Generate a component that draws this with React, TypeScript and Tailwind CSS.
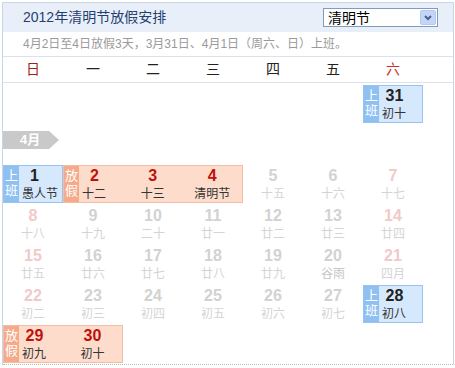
type Day = {
  n: number;
  l: string;
  tone?: "gray" | "pink" | "term";
};

const font = { fontFamily: '"Liberation Sans", "Noto Sans CJK SC", sans-serif' };

const weekdays = ["日", "一", "二", "三", "四", "五", "六"];

function PlainCell({ d }: { d: Day }) {
  const num =
    d.tone === "pink" ? "text-[#f0caca]" : "text-[#d2d2d2]";
  const lunar = d.tone === "term" ? "text-[#c6c6c6]" : "text-[#d4d4d4]";
  return (
    <div className="h-[38px] my-[1px] flex flex-col items-center">
      <div className={`pt-[1px] text-[16px] leading-[20px] font-bold ${num}`}>{d.n}</div>
      <div className={`text-[12px] leading-[17px] ${lunar}`}>{d.l}</div>
    </div>
  );
}

function Strip({ text, kind }: { text: string; kind: "work" | "off" }) {
  return (
    <div
      className={`w-[15px] shrink-0 flex flex-col items-center pt-[2px] text-[13px] leading-[15px] text-white ${
        kind === "work" ? "bg-[#8fc0f2]" : "bg-[#f5aa8a]"
      }`}
    >
      <span>{text[0]}</span>
      <span>{text[1]}</span>
    </div>
  );
}

function Inner({ d, first, kind }: { d: Day; first?: boolean; kind: "work" | "off" }) {
  const num = kind === "work" ? "text-[#222]" : "text-[#c0100c]";
  if (first) {
    return (
      <div className="w-[44px] shrink-0 flex flex-col">
        <div className={`pr-[13px] text-center text-[16px] leading-[20px] font-bold ${num}`}>{d.n}</div>
        <div className="pl-[3px] text-[12px] leading-[17px] text-[#333] whitespace-nowrap">{d.l}</div>
      </div>
    );
  }
  return (
    <div className="flex-1 flex flex-col items-center">
      <div className={`text-[16px] leading-[20px] font-bold ${num}`}>{d.n}</div>
      <div className="text-[12px] leading-[17px] text-[#333] whitespace-nowrap">{d.l}</div>
    </div>
  );
}

function Block({ days, kind, span }: { days: Day[]; kind: "work" | "off"; span: string }) {
  const box =
    kind === "work"
      ? "bg-[#d5e8fc] border-[#98c3ef]"
      : "bg-[#fddccb] border-[#f2bea6]";
  return (
    <div className={`${span} h-[38px] my-[1px] border flex ${box}`}>
      <Strip text={kind === "work" ? "上班" : "放假"} kind={kind} />
      {days.map((d, i) => (
        <Inner key={d.n} d={d} first={i === 0} kind={kind} />
      ))}
    </div>
  );
}

const g = (n: number, l: string, tone: Day["tone"] = "gray"): Day => ({ n, l, tone });

export default function App() {
  return (
    <div className="w-[455px] h-[368px] bg-white pt-[2px] pl-[2px] overflow-hidden" style={font}>
      <div className="w-[452px] border-x border-t border-[#c8d5e9]">
        <div className="h-[29px] bg-[#e9eff8] flex items-center justify-between pl-[20px] pr-[15px]">
          <span className="text-[14px] text-[#1f3f73]">2012年清明节放假安排</span>
          <div className="w-[115px] h-[19px] bg-white border border-[#7f9db9] flex items-center justify-between pl-[4px] pr-[1px]">
            <span className="text-[14px] leading-[16px] text-black">清明节</span>
            <div className="w-[16px] h-[15px] rounded-[2px] bg-[#c3d5fb] border border-[#b3c7ef] flex items-center justify-center">
              <svg width="8" height="6" viewBox="0 0 8 6">
                <polyline points="1,1 4,4 7,1" fill="none" stroke="#4d6185" strokeWidth="2" />
              </svg>
            </div>
          </div>
        </div>
        <div className="h-[24px] flex items-center pl-[20px] text-[12px] text-[#9a9a9a]">
          4月2日至4日放假3天，3月31日、4月1日（周六、日）上班。
        </div>
        <div className="h-[27px] border-y border-[#dde2ea] grid grid-cols-[repeat(7,60px)] items-center">
          {weekdays.map((w, i) => (
            <div
              key={w}
              className={`text-center text-[14px] ${
                i === 0 ? "text-[#a11d1d]" : i === 6 ? "text-[#c8331f]" : "text-[#222]"
              }`}
            >
              {w}
            </div>
          ))}
        </div>

        <div className="pt-[1px] h-[282px] border-b border-dotted border-[#bbbbbb]">
          <div className="grid grid-cols-[repeat(7,60px)]">
            <div className="col-span-6" />
            <Block days={[{ n: 31, l: "初十" }]} kind="work" span="col-span-1" />
          </div>

          <div className="mt-[7px] w-[56px] h-[18px] bg-[#c9c9c9] [clip-path:polygon(0_0,46px_0,100%_50%,46px_100%,0_100%)] flex items-center pl-[17px] text-[13px] font-bold text-white">
            4月
          </div>

          <div className="mt-[15px] grid grid-cols-[repeat(7,60px)]">
            <Block days={[{ n: 1, l: "愚人节" }]} kind="work" span="col-span-1" />
            <Block
              days={[
                { n: 2, l: "十二" },
                { n: 3, l: "十三" },
                { n: 4, l: "清明节" },
              ]}
              kind="off"
              span="col-span-3"
            />
            <PlainCell d={g(5, "十五")} />
            <PlainCell d={g(6, "十六")} />
            <PlainCell d={g(7, "十七", "pink")} />

            <PlainCell d={g(8, "十八", "pink")} />
            <PlainCell d={g(9, "十九")} />
            <PlainCell d={g(10, "二十")} />
            <PlainCell d={g(11, "廿一")} />
            <PlainCell d={g(12, "廿二")} />
            <PlainCell d={g(13, "廿三")} />
            <PlainCell d={g(14, "廿四", "pink")} />

            <PlainCell d={g(15, "廿五", "pink")} />
            <PlainCell d={g(16, "廿六")} />
            <PlainCell d={g(17, "廿七")} />
            <PlainCell d={g(18, "廿八")} />
            <PlainCell d={g(19, "廿九")} />
            <PlainCell d={g(20, "谷雨", "term")} />
            <PlainCell d={{ n: 21, l: "四月", tone: "pink" }} />

            <PlainCell d={g(22, "初二", "pink")} />
            <PlainCell d={g(23, "初三")} />
            <PlainCell d={g(24, "初四")} />
            <PlainCell d={g(25, "初五")} />
            <PlainCell d={g(26, "初六")} />
            <PlainCell d={g(27, "初七")} />
            <Block days={[{ n: 28, l: "初八" }]} kind="work" span="col-span-1" />

            <Block
              days={[
                { n: 29, l: "初九" },
                { n: 30, l: "初十" },
              ]}
              kind="off"
              span="col-span-2"
            />
          </div>
        </div>
      </div>
    </div>
  );
}
